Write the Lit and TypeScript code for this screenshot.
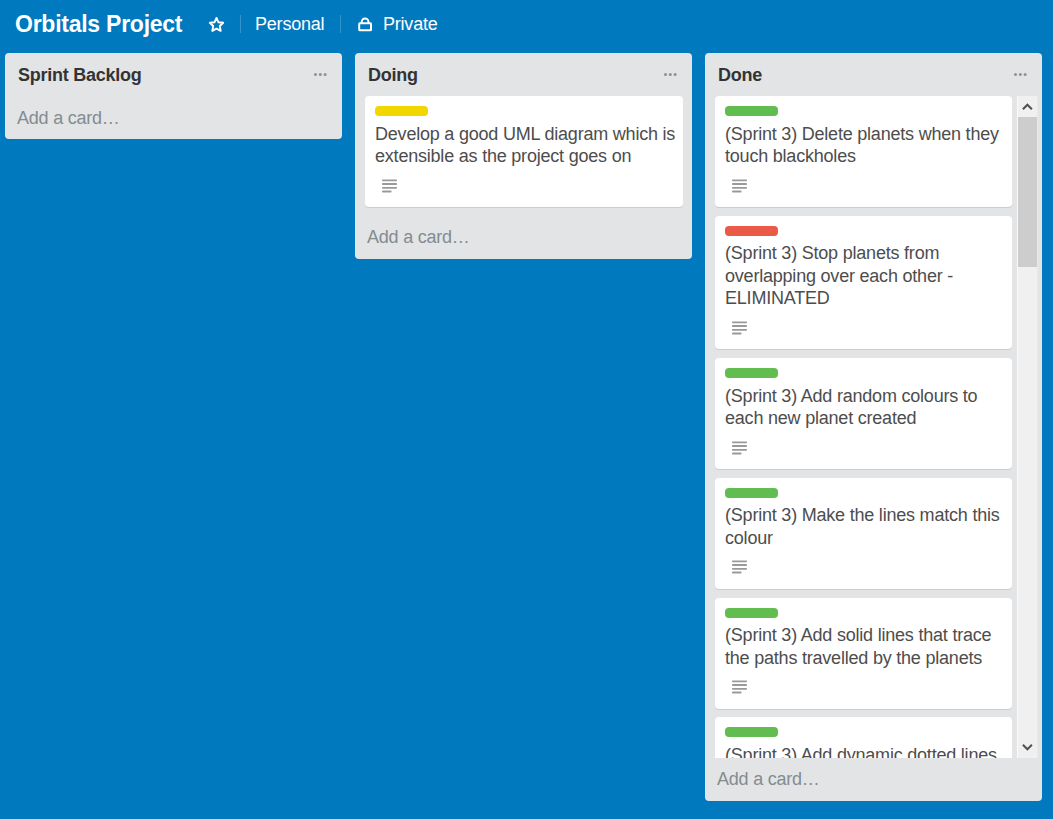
import { LitElement, html, css, svg } from "lit";
import { customElement, property } from "lit/decorators.js";

interface Card {
  color: "yellow" | "green" | "red";
  text: string;
}

const sprint = (color: Card["color"], text: string): Card => ({ color, text: `(Sprint 3) ${text}` });

const doing: Card[] = [
  { color: "yellow", text: "Develop a good UML diagram which is\nextensible as the project goes on" },
];

const done: Card[] = [
  sprint("green", "Delete planets when they\ntouch blackholes"),
  sprint("red", "Stop planets from\noverlapping over each other -\nELIMINATED"),
  sprint("green", "Add random colours to\neach new planet created"),
  sprint("green", "Make the lines match this\ncolour"),
  sprint("green", "Add solid lines that trace\nthe paths travelled by the planets"),
  sprint("green", "Add dynamic dotted lines"),
];

@customElement("board-card")
export class BoardCard extends LitElement {
  @property({ attribute: false }) card!: Card;

  static styles = css`
    :host {
      display: block;
      flex: none;
      box-sizing: border-box;
      background: #fff;
      border-radius: 4px;
      box-shadow: 0 1px 0 #c9cccd;
      padding: 10px 0 14.5px 10px;
      margin-bottom: 8.75px;
    }
    .label {
      width: 53px;
      height: 10px;
      border-radius: 4px;
    }
    .yellow { background: #f2d600; }
    .green { background: #61bd4f; }
    .red { background: #eb5a46; }
    .title {
      margin-top: 6.5px;
      line-height: 22.5px;
      white-space: pre;
      color: #4d4d4d;
    }
    .desc {
      display: block;
      margin: 11px 0 0 7px;
    }
  `;

  render() {
    return html`
      <div class="label ${this.card.color}"></div>
      <div class="title">${this.card.text}</div>
      <svg class="desc" width="15" height="14" viewBox="0 0 15 14">
        <path d="M.8 1.3H14.2M.8 5H14.2M.8 8.8H14.2M.8 12.5H8.7" stroke="#999" stroke-width="1.8" stroke-linecap="round" />
      </svg>
    `;
  }
}

@customElement("board-list")
export class BoardList extends LitElement {
  @property() heading = "";
  @property({ attribute: false }) cards: Card[] = [];
  @property({ type: Boolean }) scroll = false;

  static styles = css`
    :host {
      display: flex;
      flex-direction: column;
      flex: none;
      width: 337px;
      box-sizing: border-box;
      background: #e2e4e6;
      border-radius: 4px;
      overflow: hidden;
    }
    .head {
      flex: none;
      height: 43px;
      box-sizing: border-box;
      padding: 0 15px 0 13px;
      display: flex;
      justify-content: space-between;
    }
    h2 {
      margin: 0;
      font-size: 18px;
      font-weight: 700;
      line-height: 44px;
      letter-spacing: -0.26px;
      color: #333;
    }
    .dots { margin-top: 19px; }
    .body {
      display: flex;
      flex: 0 1 auto;
      min-height: 0;
      padding: 0 9px 0 10px;
    }
    .body.scroll {
      height: 662px;
      flex: none;
      padding-right: 4px;
      gap: 5px;
    }
    .cards {
      flex: 1;
      min-width: 0;
      display: flex;
      flex-direction: column;
      overflow: hidden;
    }
    .bar {
      flex: none;
      width: 19px;
      border-left: 1px solid #fafafa;
      border-right: 1px solid #e9eaeb;
      background: #f0f0f0;
      display: flex;
      flex-direction: column;
    }
    .thumb { height: 150px; background: #cdcdcd; }
    .bar svg { display: block; flex: none; }
    .down { margin-top: auto; }
    .add {
      flex: none;
      height: 43px;
      line-height: 44px;
      padding-left: 12px;
      color: #838c91;
      letter-spacing: -0.22px;
    }
    .add.low { line-height: 43px; }
    .add.after { line-height: 42px; }
  `;

  render() {
    const addClass = this.scroll ? "low" : this.cards.length ? "after" : "";
    return html`
      <div class="head">
        <h2>${this.heading}</h2>
        <svg class="dots" width="14" height="5" viewBox="0 0 14 5" fill="#8f9294">
          <circle cx="2.5" cy="2.5" r="1.5" /><circle cx="7.3" cy="2.5" r="1.5" /><circle cx="12.1" cy="2.5" r="1.5" />
        </svg>
      </div>
      ${this.cards.length
        ? html`<div class="body ${this.scroll ? "scroll" : ""}">
            <div class="cards">${this.cards.map((c) => html`<board-card .card=${c}></board-card>`)}</div>
            ${this.scroll
              ? html`<div class="bar">
                  <svg width="19" height="21" viewBox="0 0 19 21">
                    <path d="M4.9 13.2L9.4 8.7L13.9 13.2" fill="none" stroke="#505050" stroke-width="2" />
                  </svg>
                  <div class="thumb"></div>
                  <svg class="down" width="19" height="21" viewBox="0 0 19 21">
                    <path d="M4.9 7.8L9.4 12.3L13.9 7.8" fill="none" stroke="#505050" stroke-width="2" />
                  </svg>
                </div>`
              : ""}
          </div>`
        : ""}
      <div class="add ${addClass}">Add a card…</div>
    `;
  }
}

@customElement("app-root")
export class AppRoot extends LitElement {
  static styles = css`
    :host {
      display: flex;
      flex-direction: column;
      width: 1053px;
      height: 819px;
      box-sizing: border-box;
      overflow: hidden;
      background: #0079bf;
      font-family: "Liberation Sans", Arial, sans-serif;
      font-size: 18px;
      letter-spacing: -0.21px;
    }
    .header {
      flex: none;
      display: flex;
      align-items: center;
      height: 48px;
      padding-left: 15px;
      color: #fff;
    }
    h1 {
      margin: 0;
      width: 193px;
      font-size: 23px;
      line-height: 48px;
      font-weight: 700;
      letter-spacing: -0.25px;
    }
    .star { margin-right: 15px; }
    .sep {
      width: 1px;
      height: 18px;
      background: #3394cc;
    }
    .team { width: 99px; padding-left: 14px; box-sizing: border-box; white-space: nowrap; }
    .lock { margin: 0 10px 0 17px; }
    .board {
      display: flex;
      align-items: flex-start;
      gap: 13px;
      padding: 5px 0 0 5px;
    }
  `;

  render() {
    return html`
      <header class="header">
        <h1>Orbitals Project</h1>
        <svg class="star" width="17" height="17" viewBox="0 0 17 17">
          ${svg`<path d="M8.5 1.9L10.5 6.3L15.2 6.8L11.8 10L12.7 14.9L8.5 12.6L4.3 14.9L5.2 10L1.8 6.8L6.5 6.3Z" fill="none" stroke="#fff" stroke-width="1.9" stroke-linejoin="round" />`}
        </svg>
        <span class="sep"></span>
        <span class="team">Personal</span>
        <span class="sep"></span>
        <svg class="lock" width="15" height="15" viewBox="0 0 15 15" fill="none" stroke="#fff">
          <rect x="1.2" y="6.3" width="11.8" height="7" rx=".6" stroke-width="2" />
          <path d="M3.7 6.2V4.9A3.4 3.4 0 0 1 10.5 4.9V6.2" stroke-width="1.9" />
        </svg>
        <span>Private</span>
      </header>
      <main class="board">
        <board-list heading="Sprint Backlog"></board-list>
        <board-list heading="Doing" .cards=${doing}></board-list>
        <board-list heading="Done" .cards=${done} scroll></board-list>
      </main>
    `;
  }
}
